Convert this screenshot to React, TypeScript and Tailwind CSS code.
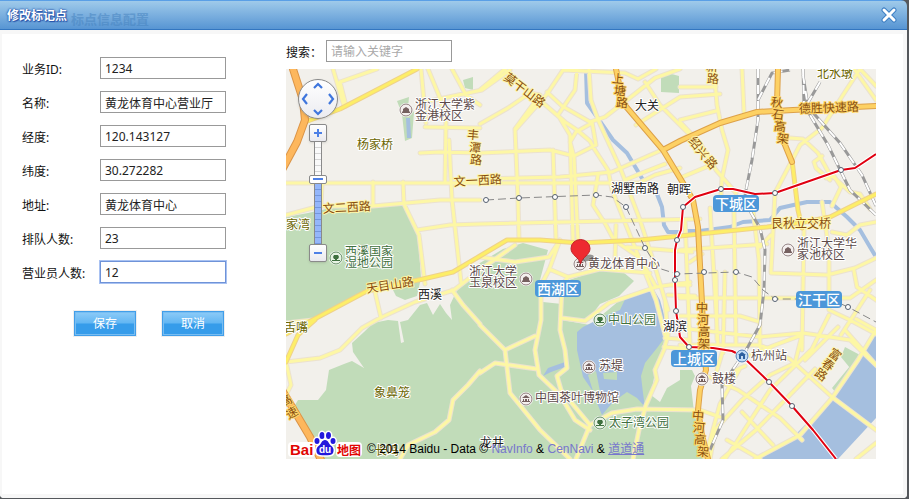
import React from "react";

const fields = [
  { id: "bizId", label: "业务ID:", value: "1234" },
  { id: "name", label: "名称:", value: "黄龙体育中心营业厅" },
  { id: "lng", label: "经度:", value: "120.143127" },
  { id: "lat", label: "纬度:", value: "30.272282" },
  { id: "address", label: "地址:", value: "黄龙体育中心" },
  { id: "queue", label: "排队人数:", value: "23" },
  { id: "staff", label: "营业员人数:", value: "12", focused: true },
];

const greens = [
  "M286 217L308 213L335 207L375 205L405 206L412 222L418 235L421 278L417 296L405 300L396 296L392 288L367 292L307 323L286 333Z",
  "M320 459L302 428L292 410L298 400L318 400L326 390L329 370L344 364L352 361L364 368L353 352L352 343L364 332L373 323L388 320L398 321L401 343L404 342L400 322L408 320L420 305L427 303L433 315L440 304L446 313L452 320L450 305L456 292L480 263L503 249L523 243L548 250L540 280L543 302L562 304L562 320L590 325L620 300L653 288L662 310L665 340L661 352L655 372L651 395L660 402L667 388L680 380L680 370L692 370L695 376L691 386L694 412L705 459Z",
  "M563 282L593 272L618 268L634 281L619 296L600 304L588 320L563 319Z",
  "M397 101L409 97L408 108L414 112L412 138L405 141L402 114Z",
  "M463 80L473 77L473 90L465 88Z",
  "M661 77L668 73L679 76L679 93L661 92Z",
  "M845 347L860 355L850 368L841 357Z",
  "M832 388L850 366L848 376L836 393Z",
];

const waters = [
  "M653 288L627 295L620 310L607 315L583 327L577 332L577 350L583 377L592 390L597 403L602 415L613 402L627 392L637 398L645 407L643 393L641 376L645 363L657 348L663 340L665 318L660 300Z",
  "M543 376L548 368L565 362L565 367L551 372Z",
  "M876 333L856 366L832 398L793 437L758 459L838 459L876 418Z",
];

const canals = [
  "M586 69L587 103L597 117L613 140L627 153L643 180M657 194L662 207L664 225L668 232L680 232",
  "M683 231L700 231L730 227L743 222L770 220L780 208L807 202L830 202L847 217L860 230L870 247L876 257",
  "M408 118L409 138",
];

const minors = [
  "M333 69L344 106M340 82L377 69M340 82L346 106",
  "M421 69L426 123M428 69L440 98L446 122L445 183M425 127L480 128M420 103L482 90L510 70M452 69L466 95L480 105",
  "M286 183L640 183M286 215L320 206L373 206L440 200L480 200",
  "M322 183L321 206M373 182L373 206M403 182L404 204L419 235L425 284M417 230L450 225L480 224L700 219",
  "M449 140L452 200L461 282M480 90L505 69M480 124L508 108L530 93L540 95L515 129L518 200L519 240",
  "M504 69L565 122L577 130L590 141L595 150L608 170L612 190L632 240L656 300L665 335",
  "M563 70L547 94L516 129M563 70L625 73L638 79L656 69M577 70L575 90L558 115L570 135L573 240",
  "M547 92L562 106L590 122L605 117L636 93L655 78L680 69M589 69L591 100L599 122L621 170L640 220L653 260L668 310",
  "M592 122L596 145L574 156L550 150L480 153L440 152L420 153M592 123L576 132L570 142L574 157L578 240",
  "M553 150L556 240M598 175L593 205L606 225L614 240L640 258L656 287M480 179L560 177L612 172L680 142",
  "M645 82L660 105L690 135L680 140M636 125L680 97L720 94M680 120L716 111M680 87L716 87M680 178L711 165",
  "M714 69L717 105L722 130L728 150L722 178L721 195M742 69L744 112M680 122L700 143L716 170L736 193",
  "M876 86L860 69L843 95L822 128L800 145L775 193L771 272M854 69L876 100",
  "M790 138L803 139L818 153L829 173L850 192L860 194L870 209M822 156L814 162L816 168L830 180M826 178L834 176L841 187L832 206",
  "M665 164L642 173L625 180M680 168L655 175L625 190M480 257L515 262L549 257L560 240M549 269L568 277L600 269L650 273",
  "M560 240L549 270L541 285L541 320L535 350L539 375L560 395L575 420L590 430M568 277L562 285L560 330L565 350L567 368L557 376L561 390L590 425L576 459",
  "M480 325L505 350L510 393L540 430L570 459M505 350L535 336M480 373L495 363L537 369",
  "M286 362L320 358L340 350L362 328L380 318L415 302L454 290L480 270L515 245M375 292L381 318M286 323L313 320M286 362L291 385L286 395",
  "M452 290L463 305L480 324M480 371L468 385L453 400L449 420L435 432L408 445L400 459M562 318L585 321L609 303L656 287L690 282",
  "M590 425L612 413L637 409L700 410L720 417M633 459L639 430L646 405L657 380L655 370L664 350L668 335L665 300",
  "M616 225L615 260M627 247L692 252M680 250L767 244M685 220L690 345M716 272L717 340M725 272L723 353M734 211L736 345M753 210L759 260L760 350",
  "M710 208L718 345M680 298L850 298L876 280M680 328L760 337L803 333L850 340L880 369M680 345L760 345L790 359L832 397L876 430",
  "M771 273L827 275L855 268L876 258M822 202L829 250L829 310L850 320L876 334M804 230L802 350M832 232L847 235L860 225L876 222",
  "M680 316L740 316L760 322M690 262L702 254M760 247L771 235M854 271L857 287L876 300M841 335L870 290M829 315L812 349L770 390L736 443L725 459M802 335L795 363L770 375L742 400L715 430L710 459",
  "M740 368L720 404L705 459M705 375L738 390L780 418L802 440M742 412L773 445M748 356L775 345L802 335M727 440L760 459M722 459L756 430L815 369M755 459L800 435L832 398L858 360L876 330",
  "M856 319L876 330M845 330L876 365M876 443L856 459M690 285L670 285M668 295L695 296M665 338L690 340M664 347L690 349M723 350L715 377M736 370L745 366M805 360L838 327",
];

const secondary = [
  "M305 122L340 109L417 69",
  "M286 334L307 323L367 291L423 279L453 272L480 256L507 240L540 240L580 243L640 240L680 236L767 227L805 222L830 217L876 194",
  "M792 160L798 210L802 228",
  "M286 362L298 335L315 320",
];

const expressways = [
  "M616 69L623 103L663 150L683 183L693 200L698 227L702 303L704 350L706 370L700 390L698 410L702 435L708 459",
  "M663 150L680 141L720 123L757 112L793 110L876 106",
  "M778 69L777 103L783 140L792 162",
];

const highways = ["M293 69L303 100L305 120L297 142L283 168", "M282 390L310 437L322 462"];

const railways = [
  "M758 69L758 120L752 160L745 195M758 100L772 73L790 70M803 69L804 105L828 145L850 190L876 215M803 75L808 107L840 143L862 175L876 206M820 82L806 106",
  "M750 211L760 228L765 250L764 290L760 325L745 352L722 385L723 420L710 450",
];

const metroLine =
  "M876 154L855 168L841 170L775 193L755 194L733 189L721 189L695 197L683 207L681 230L677 240L675 250L675 280L676 311L680 337L689 347L713 348L732 351L742 356L769 382L792 406L813 430L836 459";

const metroStops = [
  [841, 170], [775, 193], [721, 189], [683, 207], [677, 240], [675, 280], [676, 311],
  [689, 347], [769, 382], [792, 406], [486, 200], [519, 198], [555, 197], [596, 195],
  [626, 207], [645, 248], [677, 274], [704, 272], [736, 272], [775, 299], [848, 307],
];

type Tone = "road" | "place" | "town" | "poi" | "park" | "express";

const tones: Record<Tone, string> = {
  road: "fill-[#8a4f10] stroke-[#fff6a8]",
  place: "fill-[#6b6500] stroke-white",
  town: "fill-[#222222] stroke-white",
  poi: "fill-[#5c4a4a] stroke-white",
  park: "fill-[#3f7040] stroke-white",
  express: "fill-[#8a4f10] stroke-[#ffd76a]",
};

const labels: { x: number; y: number; text: string; tone: Tone; turn?: number }[] = [
  { x: 357, y: 149, text: "杨家桥", tone: "place" },
  { x: 415, y: 109, text: "浙江大学紫", tone: "poi" },
  { x: 415, y: 120, text: "金港校区", tone: "poi" },
  { x: 454, y: 186, text: "文一西路", tone: "road", turn: -3 },
  { x: 323, y: 213, text: "文二西路", tone: "road", turn: -3 },
  { x: 286, y: 229, text: "家湾", tone: "place" },
  { x: 345, y: 256, text: "西溪国家", tone: "park" },
  { x: 345, y: 267, text: "湿地公园", tone: "park" },
  { x: 367, y: 293, text: "天目山路", tone: "road", turn: -9 },
  { x: 418, y: 299, text: "西溪", tone: "town" },
  { x: 469, y: 276, text: "浙江大学", tone: "poi" },
  { x: 469, y: 287, text: "玉泉校区", tone: "poi" },
  { x: 588, y: 268, text: "黄龙体育中心", tone: "poi" },
  { x: 503, y: 79, text: "莫干山路", tone: "road", turn: 37 },
  { x: 635, y: 110, text: "大关", tone: "town" },
  { x: 611, y: 193, text: "湖墅南路", tone: "town" },
  { x: 667, y: 194, text: "朝晖", tone: "town" },
  { x: 817, y: 78, text: "北水墩", tone: "place" },
  { x: 799, y: 113, text: "德胜快速路", tone: "express", turn: -2 },
  { x: 771, y: 228, text: "艮秋立交桥", tone: "road" },
  { x: 797, y: 248, text: "浙江大学华", tone: "poi" },
  { x: 797, y: 259, text: "家池校区", tone: "poi" },
  { x: 608, y: 324, text: "中山公园", tone: "park" },
  { x: 663, y: 331, text: "湖滨", tone: "town" },
  { x: 599, y: 370, text: "苏堤", tone: "poi" },
  { x: 535, y: 402, text: "中国茶叶博物馆", tone: "poi" },
  { x: 609, y: 427, text: "太子湾公园", tone: "park" },
  { x: 751, y: 360, text: "杭州站", tone: "poi" },
  { x: 712, y: 383, text: "鼓楼", tone: "poi" },
  { x: 374, y: 397, text: "象鼻笼", tone: "place" },
  { x: 284, y: 332, text: "舌嘴", tone: "place" },
  { x: 375, y: 455, text: "长鸣", tone: "place" },
  { x: 480, y: 447, text: "龙井", tone: "town" },
];

// Street names set one character at a time along a steep road: [x, y] is each character's centre.
const steepNames: { text: string; points: number[][]; turn: number; tone: Tone }[] = [
  { text: "丰潭路", points: [[473, 135], [475, 148], [476, 160]], turn: 5, tone: "road" },
  { text: "上塘路", points: [[618, 79], [620, 91], [622, 103]], turn: 5, tone: "express" },
  { text: "新路", points: [[712, 67], [713, 79]], turn: 3, tone: "road" },
  { text: "绍兴路", points: [[695, 143], [702, 153], [711, 163]], turn: 50, tone: "road" },
  { text: "秋石高架", points: [[777, 103], [778, 115], [780, 127], [783, 139]], turn: 8, tone: "express" },
  { text: "中河高架", points: [[702, 308], [703, 320], [704, 332], [704, 344]], turn: 1, tone: "express" },
  { text: "中河高架", points: [[698, 416], [699, 428], [700, 440], [703, 452]], turn: 5, tone: "express" },
  { text: "富春路", points: [[835, 355], [828, 365], [821, 375]], turn: 35, tone: "road" },
  { text: "高速", points: [[286, 401], [292, 413]], turn: -30, tone: "express" },
];

const districts = [
  { x: 713, y: 195, w: 46, text: "下城区" },
  { x: 535, y: 280, w: 46, text: "西湖区" },
  { x: 796, y: 291, w: 46, text: "江干区" },
  { x: 671, y: 350, w: 46, text: "上城区" },
];

const poiDots: { x: number; y: number; kind: "school" | "park" | "hall" | "station" }[] = [
  { x: 406, y: 110, kind: "school" },
  { x: 336, y: 258, kind: "park" },
  { x: 526, y: 279, kind: "school" },
  { x: 580, y: 264, kind: "hall" },
  { x: 788, y: 250, kind: "school" },
  { x: 600, y: 320, kind: "park" },
  { x: 589, y: 367, kind: "hall" },
  { x: 526, y: 399, kind: "hall" },
  { x: 600, y: 423, kind: "park" },
  { x: 702, y: 379, kind: "hall" },
  { x: 742, y: 356, kind: "station" },
];

const poiGlyphs = {
  school: "M-3 -1L0 -3L3 -1V1L4 2V3H-4V2L-3 1Z",
  park: "M-2 -3H2L3 -1L2 1H1V2H4V3H-4V2H-1V1H-2L-3 -1Z",
  hall: "M-4 -1L0 -4L4 -1ZM-3 0H-2V2H-3ZM-1 0H1V2H-1ZM2 0H3V2H2ZM-4 2H4V3H-4Z",
  station: "M0 -4L4 -1H3V3H1V0H-1V3H-3V-1H-4Z",
};

const poiColors = { school: "#75605f", park: "#3f7040", hall: "#75605f", station: "#2c5f9e" };
const poiFills = { school: "#f4efee", park: "#e8f3e5", hall: "#f4efee", station: "#c3dcf5" };

function Roads({ paths, casing, color, width }: { paths: string[]; casing: string; color: string; width: number }) {
  const d = paths.join("");
  return (
    <g fill="none" strokeLinejoin="round" strokeLinecap="round">
      <path d={d} stroke={casing} strokeWidth={width + 2} />
      <path d={d} stroke={color} strokeWidth={width} />
    </g>
  );
}

function CityMap() {
  return (
    <svg
      viewBox="286 69 590 390"
      preserveAspectRatio="xMinYMin slice"
      role="img"
      aria-label="杭州地图"
      className="block h-full w-full bg-[#f2f0eb] font-['Noto_Sans_CJK_SC',sans-serif] text-[12px]"
    >
      <path d={greens.join("")} fill="#c1dcb9" />
      <path d={waters.join("")} fill="#a5bfdf" />
      <path d="M588 375L596 371L602 402L597 404ZM603 373L617 372L617 380L604 379Z" fill="#c1dcb9" />
      <path d={canals.join("")} fill="none" stroke="#a5bfdf" strokeWidth="4" strokeLinejoin="round" />
      <Roads paths={minors} casing="#ece2cf" color="#fdf7a5" width={3} />
      <g fill="none">
        <path d={railways.join("")} stroke="#999999" strokeWidth="3" />
        <path d={railways.join("")} stroke="#ffffff" strokeWidth="2" strokeDasharray="9 7" />
      </g>
      <Roads paths={secondary} casing="#efd28a" color="#fdee67" width={3} />
      <Roads paths={highways} casing="#db9447" color="#fdb75d" width={6} />
      <Roads paths={expressways} casing="#dda149" color="#fdd164" width={4} />

      <path
        d="M486 200L519 198L596 195L612 197L626 207L645 248L658 268L677 274L736 272L752 277L763 290L775 299L830 299L848 307L876 322"
        fill="none"
        stroke="#888888"
        strokeWidth="1"
        strokeDasharray="8 4"
      />
      <g fill="none" strokeLinejoin="round">
        <path d={metroLine} stroke="#ffffff" strokeWidth="4" />
        <path d={metroLine} stroke="#e00010" strokeWidth="2" />
      </g>
      {metroStops.map(([x, y]) => (
        <circle key={`${x}-${y}`} cx={x} cy={y} r="2.5" fill="#ffffff" stroke="#556070" strokeWidth="1" />
      ))}

      {poiDots.map((p) => (
        <g key={`${p.x}-${p.y}`} transform={`translate(${p.x} ${p.y})`}>
          <circle r="7" fill="#ffffff" />
          <circle r="6" fill={poiFills[p.kind]} stroke={poiColors[p.kind]} strokeOpacity="0.8" strokeWidth="1" />
          <path d={poiGlyphs[p.kind]} fill={poiColors[p.kind]} />
        </g>
      ))}

      <g strokeWidth="2" strokeLinejoin="round">
        {labels.map((l) => (
          <text
            key={`${l.x}-${l.y}`}
            x={l.x}
            y={l.y}
            transform={l.turn ? `rotate(${l.turn} ${l.x} ${l.y})` : undefined}
            className={`[paint-order:stroke] ${tones[l.tone]}`}
          >
            {l.text}
          </text>
        ))}
        {steepNames.map((s) =>
          s.points.map(([x, y], i) => (
            <text
              key={`${x}-${y}`}
              x={x}
              y={y + 4}
              textAnchor="middle"
              transform={`rotate(${s.turn} ${x} ${y})`}
              className={`[paint-order:stroke] ${tones[s.tone]}`}
            >
              {s.text[i]}
            </text>
          ))
        )}
      </g>

      {districts.map((d) => (
        <g key={d.text}>
          <rect x={d.x} y={d.y} width={d.w} height="17" rx="4" fill="#4c97d9" />
          <text x={d.x + d.w / 2} y={d.y + 14} textAnchor="middle" className="fill-white text-[14px] font-medium">
            {d.text}
          </text>
        </g>
      ))}

      <ellipse cx="587" cy="258" rx="7" ry="3" fill="#555555" opacity="0.6" transform="rotate(-15 587 258)" />
      <path
        d="M580.500 264C579 257 571 255 571 248.500A9.500 9 0 0 1 590 248.500C590 255 582 257 580.500 264Z"
        fill="#ee2a30"
        stroke="#c01f25"
        strokeWidth="1"
      />
    </svg>
  );
}

function BaiduLogo() {
  return (
    <div className="relative flex h-7 w-[74px] items-end justify-between" aria-label="Baidu 地图">
      <span className="rounded-sm bg-white px-0.5 font-['Liberation_Sans',sans-serif] text-[15px] leading-[15px] font-bold text-[#e10602]">
        Bai
      </span>
      <span className="rounded-sm bg-white px-px font-['Noto_Sans_CJK_SC',sans-serif] text-[12px] leading-[15px] font-bold text-[#e10602]">
        地图
      </span>
      <svg viewBox="0 0 24 27" className="absolute bottom-0 left-[25px] h-[27px] w-6" aria-hidden="true">
        <g fill="#2319dc" stroke="#ffffff" strokeWidth="3" className="[paint-order:stroke]">
          <path d="M12 10C8.500 10 8.500 14 5.500 16C2.500 18 2.500 24.500 7 25C10 25.300 14 25.300 17 25C21.500 24.500 21.500 18 18.500 16C15.500 14 15.500 10 12 10Z" />
          <ellipse cx="4" cy="11" rx="2.500" ry="3" />
          <ellipse cx="9" cy="5.500" rx="2.500" ry="3.500" />
          <ellipse cx="15.500" cy="5.500" rx="2.500" ry="3.500" />
          <ellipse cx="20" cy="11" rx="2.500" ry="3" />
        </g>
        <text x="12" y="23" textAnchor="middle" className="fill-white font-['Liberation_Sans',sans-serif] text-[10px] font-bold">
          du
        </text>
      </svg>
    </div>
  );
}

function PanPad() {
  const arrows = [
    { name: "向上平移", place: "col-start-2 row-start-1", d: "M2 8L6 4L10 8" },
    { name: "向左平移", place: "col-start-1 row-start-2", d: "M8 1L4 6L8 11" },
    { name: "向右平移", place: "col-start-3 row-start-2", d: "M4 1L8 6L4 11" },
    { name: "向下平移", place: "col-start-2 row-start-3", d: "M2 4L6 8L10 4" },
  ];
  return (
    <div className="grid size-10 grid-cols-3 grid-rows-3 place-items-center rounded-full border border-[#8a8a8a] bg-linear-to-b from-white to-[#ececf0] shadow-sm">
      {arrows.map((a) => (
        <button key={a.name} type="button" aria-label={a.name} className={`size-3 ${a.place}`}>
          <svg viewBox="0 0 12 12" className="size-3" fill="none" stroke="#3f76dd" strokeWidth="2.200">
            <path d={a.d} />
          </svg>
        </button>
      ))}
    </div>
  );
}

const zoomButton =
  "flex size-[18px] items-center justify-center rounded-xs border border-[#8a8a8a] bg-linear-to-b from-white to-[#e9e9ee] shadow-sm";

function ZoomControl() {
  return (
    <div className="flex flex-col items-center">
      <button type="button" aria-label="放大" className={zoomButton}>
        <svg viewBox="0 0 10 10" className="size-2.5" stroke="#4d80e6" strokeWidth="2">
          <path d="M1 5H9M5 1V9" />
        </svg>
      </button>
      <div className="relative flex h-[102px] w-[18px] justify-center">
        <div className="flex w-2 flex-col border-x border-[#8a8a8a]">
          <div className="h-9 bg-[repeating-linear-gradient(to_bottom,#fafafa_0px,#fafafa_5px,#d5d5d5_5px,#d5d5d5_6px)]" />
          <div className="flex-1 bg-[repeating-linear-gradient(to_bottom,#94b6fa_0px,#94b6fa_5px,#7396dc_5px,#7396dc_6px)]" />
        </div>
        <input
          type="range"
          aria-label="缩放级别"
          min={0}
          max={100}
          defaultValue={65}
          className="absolute inset-0 h-full w-full appearance-none bg-transparent [direction:rtl] [writing-mode:vertical-lr] [&::-webkit-slider-thumb]:h-[9px] [&::-webkit-slider-thumb]:w-[18px] [&::-webkit-slider-thumb]:appearance-none [&::-webkit-slider-thumb]:rounded-xs [&::-webkit-slider-thumb]:border [&::-webkit-slider-thumb]:border-[#8a8a8a] [&::-webkit-slider-thumb]:bg-white [&::-webkit-slider-thumb]:bg-[linear-gradient(#4d80e6,#4d80e6)] [&::-webkit-slider-thumb]:bg-[length:10px_2px] [&::-webkit-slider-thumb]:bg-center [&::-webkit-slider-thumb]:bg-no-repeat"
        />
      </div>
      <button type="button" aria-label="缩小" className={zoomButton}>
        <svg viewBox="0 0 10 10" className="size-2.5" stroke="#4d80e6" strokeWidth="2">
          <path d="M1 5H9" />
        </svg>
      </button>
    </div>
  );
}

function MapPanel() {
  return (
    <div className="relative h-[390px] overflow-hidden">
      <CityMap />
      <div className="absolute top-2.5 left-3 flex flex-col items-center gap-[5px]">
        <PanPad />
        <ZoomControl />
      </div>
      <div className="absolute bottom-0.5 left-0.5 flex items-end gap-[5px]">
        <BaiduLogo />
        <p className="font-['Liberation_Sans','Noto_Sans_CJK_SC',sans-serif] text-[12px] leading-4 whitespace-nowrap text-black">
          © 2014 Baidu - Data © <a href="#navinfo" className="text-[#7777cc]">NavInfo</a> &amp;{" "}
          <a href="#cennavi" className="text-[#7777cc]">CenNavi</a> &amp;{" "}
          <a href="#daodaotong" className="text-[#7777cc] underline">道道通</a>
        </p>
      </div>
    </div>
  );
}

const textBox = "h-[22px] w-[126px] border pt-px px-1 text-[12px] text-[#222222] outline-none";
const actionButton =
  "h-[25px] w-[62px] border border-[#419ee9] bg-[linear-gradient(to_bottom,#8dcbf7_0%,#62b6f3_48%,#369cea_52%,#369cea_100%)] pt-px text-[12px] leading-4 text-white shadow-[inset_0_0_0_1px_#77bdf2,0_0_0_1px_#eeeeee]";

export default function App() {
  return (
    <div className="flex min-h-screen bg-[#55585c] pr-0.5 pb-px font-['Noto_Sans','Noto_Sans_CJK_SC',sans-serif] text-[12px] text-[#111111]">
      <section role="dialog" aria-labelledby="dialog-title" className="flex flex-1 flex-col overflow-hidden rounded-tr-md rounded-b-sm">
        <header className="flex h-[30px] shrink-0 items-center justify-between border-t border-b border-t-[#5a9fe6] border-b-[#3376c0] bg-linear-to-b from-[#9fcaea] to-[#5795d3] pr-2.5 pl-[7px]">
          <div className="relative flex items-center pt-0.5">
            <h1 id="dialog-title" className="relative z-10 text-[12px] font-bold text-white [text-shadow:0_0_2px_#2450a8,0_0_2px_#2450a8,1px_1px_1px_#2450a8]">
              修改标记点
            </h1>
            <span aria-hidden="true" className="absolute top-1 left-16 text-[13px] leading-5 font-bold whitespace-nowrap text-[#4683bf] opacity-50">
              标点信息配置
            </span>
          </div>
          <button type="button" aria-label="关闭" className="size-4">
            <svg viewBox="0 0 16 16" className="size-4" fill="none" strokeLinecap="round">
              <path d="M3 3L13 13M13 3L3 13" stroke="#3d7fc4" strokeWidth="5" />
              <path d="M3 3L13 13M13 3L3 13" stroke="#ffffff" strokeWidth="3" />
            </svg>
          </button>
        </header>

        <div className="flex flex-1 items-start border-4 border-l-2 border-[#f7f7f7] bg-white pt-1.5 pr-[27px] pb-8 pl-5">
          <form className="mt-[17px] w-[264px] shrink-0" onSubmit={(e) => e.preventDefault()}>
            <div className="flex flex-col gap-3">
              {fields.map((f) => (
                <div key={f.id} className="flex items-center">
                  <label htmlFor={f.id} className="w-[78px] pt-1">
                    {f.label}
                  </label>
                  <input
                    id={f.id}
                    type="text"
                    defaultValue={f.value}
                    className={`${textBox} ${f.focused ? "border-[#6f93d8] shadow-[0_0_0_1px_#a9c2f2]" : "border-[#999999]"}`}
                  />
                </div>
              ))}
            </div>
            <div className="mt-7 ml-[52px] flex gap-[26px]">
              <button type="submit" className={actionButton}>
                保存
              </button>
              <button type="button" className={actionButton}>
                取消
              </button>
            </div>
          </form>

          <div className="min-w-0 flex-1">
            <div className="mb-[7px] flex items-center">
              <label htmlFor="keyword" className="w-10 pt-1 whitespace-nowrap">
                搜索：
              </label>
              <input
                id="keyword"
                type="text"
                placeholder="请输入关键字"
                className={`${textBox} border-[#999999] placeholder:text-[#a9a9a9]`}
              />
            </div>
            <MapPanel />
          </div>
        </div>
      </section>
    </div>
  );
}
